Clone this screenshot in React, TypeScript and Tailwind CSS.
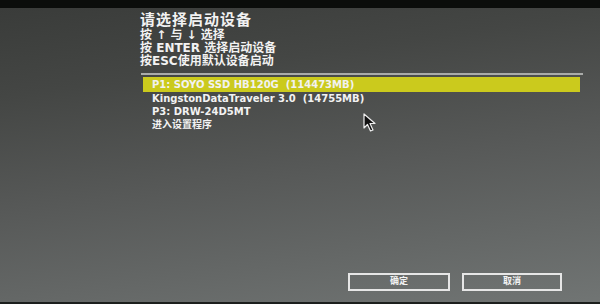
import React from "react";

const font = { fontFamily: '"DejaVu Sans", "Noto Sans CJK SC", sans-serif' };

export default function App() {
  return (
    <div
      className="relative w-[600px] h-[304px] overflow-hidden flex flex-col bg-[linear-gradient(172deg,#393b39_0%,#444644_25%,#575958_55%,#717574_100%)] text-[#f2f2f2]"
      style={font}
    >
      <div className="h-[8px] bg-[#0b0d0b] shrink-0" />
      <div className="flex flex-col pl-[140px] pr-[17px] flex-1">
        <div className="mt-[4px] text-[15px] leading-[16px] font-bold tracking-[1px]">请选择启动设备</div>
        <div className="mt-[1px] flex flex-col text-[12px] leading-[13px] font-bold">
          <div>按 ↑ 与 ↓ 选择</div>
          <div>按 ENTER 选择启动设备</div>
          <div>按ESC使用默认设备启动</div>
        </div>
        <div className="mt-[5px] h-[2px] bg-[#a9aba9] ml-[1px]" />
        <div className="mt-[2px] flex flex-col text-[10px] font-bold">
          <div className="h-[15px] bg-[#cbca1d] mx-[3px] pl-[9px] flex items-center">P1: SOYO SSD HB120G&nbsp;&nbsp;(114473MB)</div>
          <div className="h-[13px] pl-[12px] flex items-center">KingstonDataTraveler 3.0&nbsp;&nbsp;(14755MB)</div>
          <div className="h-[13px] pl-[12px] flex items-center">P3: DRW-24D5MT</div>
          <div className="h-[13px] pl-[12px] flex items-center">进入设置程序</div>
        </div>
        <div className="mt-auto mb-[11px] flex justify-end gap-[12px] pr-[21px]">
          <div className="w-[102px] h-[18px] border-2 border-[#e6e6e6] flex items-center justify-center text-[9px] font-bold">确定</div>
          <div className="w-[100px] h-[18px] border-2 border-[#e6e6e6] flex items-center justify-center text-[9px] font-bold">取消</div>
        </div>
      </div>
      <div className="h-[2px] bg-[#1c1f1d] shrink-0" />
      <svg className="absolute left-[363px] top-[113px]" width="16" height="20" viewBox="0 0 16 20">
        <path d="M1 1 L1 15 L4.5 11.5 L7.5 18 L10 17 L7 10.5 L12 10.5 Z" fill="#111" stroke="#eee" strokeWidth="1.2" strokeLinejoin="round" />
      </svg>
    </div>
  );
}
